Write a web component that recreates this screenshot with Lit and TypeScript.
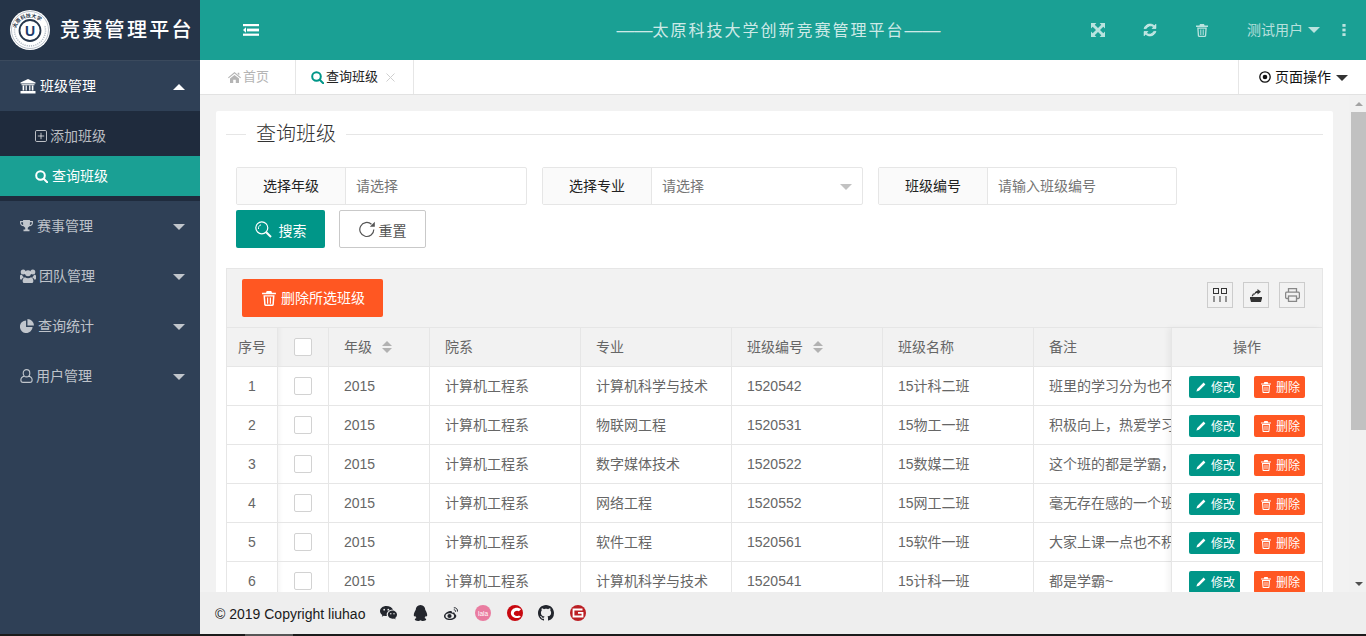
import { LitElement, html, css, svg } from "lit";
import { customElement } from "lit/decorators.js";

const ic = (w: number, h: number, vb: string, body: unknown, cls = "") =>
  html`<svg class="ic ${cls}" width=${w} height=${h} viewBox=${vb} fill="currentColor">${body}</svg>`;

const I = {
  shrink: () => ic(16, 12, "0 0 16 12", svg`<rect width="16" height="2.2"/><rect x="4" y="4.6" width="12" height="2.8"/><rect y="9.6" width="16" height="2.2"/><path d="M3 3.2v5.6L0 6z"/>`),
  bank: () => ic(16, 16, "0 0 16 16", svg`<path d="M8 1 15.5 4.6V5.6H.5V4.6z"/><path d="M1.5 6.2h13v1h-13zM.5 13h15v2.4H.5z"/><path d="M2.6 7.5h1.6v5H2.6zM5.6 7.5h1.2v5H5.6zM9.2 7.5h1.2v5H9.2zM11.8 7.5h1.6v5h-1.6z"/>`),
  trophy: () => ic(13, 12, "0 0 15 14", svg`<path d="M3.5 0h8v1.2H15v2.2c0 2-1.7 3.5-4.2 3.9-.5.8-1.1 1.3-1.8 1.6v2.3h2V13H4v-1.8h2V8.900c-.7-.3-1.300-.8-1.800-1.600C1.700 6.900 0 5.400 0 3.400V1.200h3.500zM1.300 2.500v.9c0 1.100.9 2 2.300 2.400-.1-1-.1-2.100-.1-3.300zm12.400 0h-2.200c0 1.200 0 2.300-.1 3.300 1.400-.4 2.300-1.300 2.300-2.400z"/>`),
  users: () => ic(16, 14, "0 0 16 14", svg`<circle cx="3.200" cy="3" r="2.500"/><circle cx="12.800" cy="3" r="2.500"/><circle cx="8" cy="4.300" r="3"/><path d="M0 7c0-1 1-1.500 2-1.300.3 1 1 2 2 2.600C2.800 8.700 2 9.700 1.800 10.500H.8C.3 10.500 0 10 0 9.500zM16 7c0-1-1-1.500-2-1.300-.3 1-1 2-2 2.600 1.200.4 2 1.400 2.200 2.200h1c.5 0 .8-.5.8-1zM5 8.300c1.700 1.200 4.300 1.200 6 0 1.500.5 2.300 1.700 2.300 3.300v.9c0 .9-.6 1.500-1.500 1.500H4.200c-.9 0-1.500-.6-1.500-1.500v-.9c0-1.600.8-2.800 2.300-3.300z"/>`),
  pie: () => ic(14, 14, "0 0 15 15", svg`<path d="M6.500 1.500v7h7A6.800 6.800 0 1 1 6.500 1.500z"/><path d="M8 0a7 7 0 0 1 7 7H8z"/>`),
  user: () => ic(13, 14, "0 0 15 16", svg`<g fill="none" stroke="currentColor" stroke-width="1.300"><ellipse cx="7.500" cy="4.800" rx="3.800" ry="4.200"/><path d="M4.800 8.200C2.300 8.800 1 10.500 1 12.500 1 14.300 2 15.300 3.500 15.300h8c1.500 0 2.500-1 2.500-2.800 0-2-1.300-3.700-3.800-4.300"/></g>`),
  plusBox: () => ic(12, 12, "0 0 12 12", svg`<g fill="none" stroke="currentColor"><rect x=".5" y=".5" width="11" height="11" rx="1.200"/><path d="M6 2.800v6.400M2.800 6h6.400"/></g>`),
  search: (s = 13) => ic(s, s, "0 0 13 13", svg`<g fill="none" stroke="currentColor" stroke-width="2"><circle cx="5.500" cy="5.500" r="4.300"/><path d="M8.700 8.700 12.200 12.200" stroke-linecap="round"/></g>`),
  home: () => ic(13, 11, "0 0 13 11", svg`<path d="M6.500 0 13 5.600l-.7.700L6.500 1.500.7 6.300 0 5.600zM2 6.600l4.500-3.700L11 6.600V11H7.800V7.800H5.200V11H2zM9.700 .7h1.600v2.600L9.700 2z"/>`),
  close: () => ic(9, 9, "0 0 9 9", svg`<path d="M.5.500l8 8M8.500.500l-8 8" stroke="currentColor" fill="none"/>`),
  full: () => ic(14, 14, "0 0 14 14", svg`<path d="M0 0h5.400L3.700 1.700 7 5 10.300 1.700 8.600 0H14v5.400L12.300 3.700 9 7l3.300 3.300L14 8.600V14H8.600l1.700-1.700L7 9l-3.300 3.300L5.400 14H0V8.600l1.700 1.700L5 7 1.700 3.700 0 5.400z"/>`),
  refresh: () => ic(14, 14, "0 0 14 14", svg`<path stroke="currentColor" stroke-width=".7" d="M12.900 5.500H9.100l1.500-1.500a4.600 4.600 0 0 0-7.300 1.600H1C1.900 3 4.200 1 7 1c1.700 0 3.200.7 4.300 1.800L12.900 1.200zM1.100 8.500h3.800L3.400 10a4.600 4.600 0 0 0 7.300-1.600H13C12.100 11 9.800 13 7 13c-1.700 0-3.200-.7-4.300-1.800L1.100 12.800z"/>`),
  trash: (w = 12, h = 13) => ic(w, h, "0 0 12 13", svg`<path d="M4 0h4l.6 1.600H12v1.300H0V1.600h3.400zM1.200 3.600h9.600l-.6 8.200c0 .7-.5 1.200-1.200 1.200H3c-.7 0-1.200-.5-1.200-1.200zm1.400 1.200.5 7h5.800l.5-7zM4.300 5.600h1v5.400h-1zM6.700 5.600h1v5.400h-1z"/>`),
  dots: () => ic(4, 12, "0 0 4 12", svg`<rect x=".4" width="3.200" height="2.800"/><rect x=".4" y="4.600" width="3.200" height="2.800"/><rect x=".4" y="9.200" width="3.200" height="2.800"/>`),
  target: () => ic(12, 12, "0 0 12 12", svg`<circle cx="6" cy="6" r="5.200" fill="none" stroke="currentColor" stroke-width="1.300"/><circle cx="6" cy="6" r="2.300"/>`),
  reload: () => ic(17, 17, "0 0 17 17", svg`<g fill="none" stroke="currentColor" stroke-width="1.200"><path d="M14.800 8.500a7 7 0 1 1-2.300-5.200"/></g><path d="M15.800 .8v5h-5z"/>`),
  searchThin: () => ic(17, 17, "0 0 17 17", svg`<g fill="none" stroke="currentColor"><circle cx="6.800" cy="6.800" r="6" stroke-width="1.200"/><path d="M3.500 8c-.4-2 .8-3.800 2.500-4.200" /><path d="M11.200 11.200 16 16" stroke-width="2"/></g>`),
  pencil: () => ic(10, 10, "0 0 10 10", svg`<path d="M7.600.600l1.800 1.800L3 8.800.4 9.600l.8-2.600z"/>`),
  cols: () => ic(14, 14, "0 0 14 14", svg`<g fill="none" stroke="currentColor"><rect x=".5" y=".5" width="5" height="5"/><rect x="8.500" y=".5" width="5" height="5"/><path d="M1 8v6M7 8v6M13 8v6"/></g>`),
  exportI: () => ic(14, 14, "0 0 14 14", svg`<path d="M1 9h12v1.200l-1 3.800H2L1 10.200z"/><path d="M2.500 8.200 4 5.500h2v1H4.700l-.7 1.700zM8.500 1 12 3.800 8.500 6.600V4.900C7 4.900 6 5.500 5.500 7 5.300 4.600 6.500 3 8.500 2.800z"/>`),
  print: () => ic(15, 14, "0 0 15 14", svg`<g fill="none" stroke="currentColor" stroke-width="1.300"><path d="M3.500 4V.6h8V4M3.500 10.500H1.800C1 10.500.6 10 .6 9.300V5.500C.6 4.700 1 4.200 1.800 4.200h11.400c.8 0 1.200.5 1.200 1.300v3.800c0 .7-.4 1.200-1.200 1.200h-1.700"/><rect x="3.500" y="8" width="8" height="5.400"/></g>`),
  wechat: () => ic(17, 15, "0 0 17 15", svg`<path d="M6.300 0C2.900 0 0 2.200 0 5.100c0 1.600.9 3 2.300 4l-.5 1.700 2-1c.8.200 1.600.3 2.500.3h.6A4 4 0 0 1 6.700 8.600c0-2.700 2.600-4.800 5.800-4.800h.5C12.300 1.600 9.500 0 6.300 0z"/><path d="M17 8.600c0-2.400-2.300-4.100-4.500-4.100-2.600 0-4.700 1.800-4.700 4.100s2.100 4.100 4.700 4.100c.5 0 1.100-.1 1.600-.2l1.500.9-.4-1.400c1.100-.8 1.800-2 1.800-3.400z"/><circle cx="4.200" cy="3.700" r=".9" fill="#eee"/><circle cx="8.300" cy="3.700" r=".9" fill="#eee"/><circle cx="10.800" cy="7.700" r=".7" fill="#eee"/><circle cx="14" cy="7.700" r=".7" fill="#eee"/>`),
  qq: () => ic(15, 16, "0 0 15 16", svg`<path d="M7.500 0c3 0 4.700 2.200 4.800 5 .9 1.200 1.900 3.400 1.900 5.300 0 1.300-.6 1.600-1.400.5-.2.900-.7 1.700-1.300 2.300 1 .4 1.700.9 1.700 1.500 0 .9-1.500 1.400-3.200 1.400-1 0-2-.3-2.500-.7-.5.400-1.500.7-2.500.7-1.700 0-3.200-.5-3.200-1.400 0-.6.700-1.100 1.700-1.500-.6-.6-1.100-1.400-1.300-2.300-.8 1.100-1.400.8-1.400-.5 0-1.900 1-4.100 1.900-5.300C2.800 2.200 4.500 0 7.500 0z"/>`),
  weibo: () => ic(15, 14, "0 0 15 14", svg`<path d="M6 5C3 5.600 0 8 0 10.200 0 12.300 2.700 14 6 14c3.400 0 6.300-1.900 6.300-4 0-1.300-1.200-1.700-1.700-1.900.5-1 .3-2-1.700-1.500C8.800 6.700 8 7 8 6.500c.2-1.100-.6-1.800-2-1.500z" /><ellipse cx="5.800" cy="10" rx="4.300" ry="2.800" fill="#eee"/><circle cx="5.500" cy="10" r="2.100"/><path d="M9.800 1.800c2.200-.5 4.200 1.400 3.600 3.800M9.800 3.800c1.100-.2 2 .8 1.700 1.900" stroke="currentColor" fill="none"/>`),
  lala: () => ic(16, 16, "0 0 16 16", svg`<circle cx="8" cy="8" r="8" fill="#e97ca0"/><text x="8" y="10.500" font-size="6.500" fill="#fff" text-anchor="middle" font-family="Liberation Sans">lala</text>`),
  cc: () => ic(16, 16, "0 0 16 16", svg`<circle cx="8" cy="8" r="8" fill="#c8080f"/><path d="M14 4.300C11.600 2.300 8 2.300 5.700 4.300 3.300 6.400 3.300 9.800 5.700 11.700c2.300 1.900 6 1.800 8.300 0l-2-1.300C10.400 11.400 8.500 11.200 7.500 10.100 6.400 8.900 6.700 7.300 7.900 6.400c1.100-.9 2.900-1 4-.2z" fill="#fff"/>`),
  github: () => ic(16, 16, "0 0 16 16", svg`<path d="M8 0C3.580 0 0 3.580 0 8c0 3.540 2.290 6.530 5.470 7.590.4.07.55-.17.55-.38 0-.19-.01-.82-.01-1.490-2.010.37-2.530-.49-2.690-.94-.09-.23-.48-.94-.82-1.130-.28-.15-.68-.52-.01-.53.63-.01 1.080.58 1.230.82.72 1.210 1.870.87 2.330.66.07-.52.28-.87.51-1.070-1.780-.2-3.640-.89-3.640-3.950 0-.87.31-1.590.82-2.150-.08-.2-.36-1.020.08-2.120 0 0 .67-.21 2.200.82.64-.18 1.320-.27 2-.27.68 0 1.360.09 2 .27 1.530-1.040 2.200-.82 2.200-.82.44 1.100.16 1.920.08 2.120.51.56.82 1.270.82 2.150 0 3.070-1.870 3.750-3.650 3.950.29.25.54.73.54 1.480 0 1.070-.01 1.930-.01 2.200 0 .21.15.46.55.38A8.013 8.013 0 0016 8c0-4.420-3.580-8-8-8z"/>`),
  gg: () => ic(16, 16, "0 0 16 16", svg`<circle cx="8" cy="8" r="8" fill="#bb1f24"/><path d="M12.500 4.500h-9v7h9V7.800H8" fill="none" stroke="#fff" stroke-width="1.800"/>`),
  logo: () => html`<svg class="logo" width="40" height="40" viewBox="0 0 40 40">
    <circle cx="20" cy="20" r="20" fill="#fff"/>
    <circle cx="20" cy="20" r="18.500" fill="none" stroke="#8d99a8" stroke-width=".6"/>
    <circle cx="20" cy="20.500" r="15.500" fill="none" stroke="#b6bec8" stroke-width="1.500" stroke-dasharray="1.200 1"/>
    <defs><path id="arc" d="M5.500 22a14.500 14.500 0 0 1 29 0"/></defs>
    <path d="M6 16a15 15 0 0 1 28 0" fill="none" stroke="#fff" stroke-width="5"/>
    <text font-size="5" font-family="Noto Sans CJK SC" font-weight="700" fill="#26364b"><textPath href="#arc" startOffset="8%">太原科技大学</textPath></text>
    <circle cx="20" cy="20.500" r="10.500" fill="#fff" stroke="#26364b" stroke-width="1.800"/>
    <text x="20" y="25.500" font-size="14" font-weight="700" font-family="Liberation Sans" fill="#1d3a6b" text-anchor="middle">U</text>
  </svg>`,
};

const rows = [
  ["1", "2015", "计算机工程系", "计算机科学与技术", "1520542", "15计科二班", "班里的学习分为也不错"],
  ["2", "2015", "计算机工程系", "物联网工程", "1520531", "15物工一班", "积极向上，热爱学习"],
  ["3", "2015", "计算机工程系", "数字媒体技术", "1520522", "15数媒二班", "这个班的都是学霸，"],
  ["4", "2015", "计算机工程系", "网络工程", "1520552", "15网工二班", "毫无存在感的一个班"],
  ["5", "2015", "计算机工程系", "软件工程", "1520561", "15软件一班", "大家上课一点也不积极"],
  ["6", "2015", "计算机工程系", "计算机科学与技术", "1520541", "15计科一班", "都是学霸~"],
];

const menus = [
  { t: "赛事管理", i: I.trophy, gap: 4 },
  { t: "团队管理", i: I.users, gap: 3 },
  { t: "查询统计", i: I.pie, gap: 4 },
  { t: "用户管理", i: I.user, gap: 3 },
];

@customElement("app-root")
export class AppRoot extends LitElement {
  static styles = css`
    :host { display: flex; flex-direction: column; height: 636px; width: 1366px; overflow: hidden;
      font-family: "Liberation Sans", "Noto Sans CJK SC", sans-serif; font-size: 14px; line-height: 20px; color: #666; }
    * { box-sizing: border-box; }
    .ic { display: block; flex: none; }
    .shell { display: flex; height: 634px; }
    .strip { height: 2px; background: #1b1b1b; display: flex; padding-left: 245px; }
    .strip i { display: block; width: 48px; background: #565656; }

    .side { width: 200px; flex: none; background: #2f4056; color: rgba(255,255,255,.7); }
    .brand { height: 61px; background: #253448; border-bottom: 1px solid #3b4a5d; display: flex; align-items: center; padding-left: 10px; gap: 10px; }
    .logo { display: block; flex: none; }
    .brand-t { color: #fff; font-size: 20px; letter-spacing: 2.300px; white-space: nowrap; font-weight: 500; line-height: 28px; }
    .mi { height: 50px; display: flex; align-items: center; padding-left: 20px; position: relative; }
    .mi.open { color: #fff; }
    .mi .name { flex: 1; }
    .caret { width: 0; height: 0; border: 6px solid transparent; border-bottom-width: 0; border-top: 6px solid currentColor; }
    .caret.up { border-top-width: 0; border-bottom: 6px solid currentColor; border-top-color: transparent; }
    .mi .caret { margin-right: 15px; margin-top: 1px; }
    .sub { background: #1f2b3d; padding: 5px 0; }
    .si { height: 40px; padding-left: 35px; display: flex; align-items: center; }
    .si.on { background: #1aa094; color: #fff; }

    .main { flex: 1; min-width: 0; display: flex; flex-direction: column; }
    .top { height: 60px; flex: none; background: #1aa094; color: rgba(255,255,255,.7); display: flex; align-items: center; }
    .top .toggle { margin-left: 43px; color: #fff; }
    .top .title { position: absolute; left: 616px; width: 325px; text-align: center; font-size: 16px; letter-spacing: 2px; white-space: nowrap; top: 20px; line-height: 20px; color: rgba(255,255,255,.8); }
    .top .title .dash { letter-spacing: 0; font-size: 18px; }
    .top .right { margin-left: auto; display: flex; align-items: center; }
    .top .a1 { margin-right: 38px; }
    .top .a2 { margin-right: 39px; }
    .top .a3 { margin-right: 39px; }
    .top .name { margin-right: 5px; white-space: nowrap; }
    .top .dots { margin-left: 22px; margin-right: 20px; }

    .tabs { height: 35px; flex: none; background: #fff; border-bottom: 1px solid #e2e2e2; display: flex; }
    .tab { display: flex; align-items: center; border-right: 1px solid #e6e6e6; height: 34px; font-size: 13px; }
    .tab.t1 { width: 96px; padding-left: 28px; color: #b5b5b5; gap: 2px; }
    .tab.t2 { width: 118px; padding-left: 15px; color: #222; gap: 2px; }
    .tab.t2 > .ic { color: #009688; }
    .tab.t2 .x { margin-left: 6px; color: #cfcfcf; }
    .tab-end { margin-left: auto; width: 128px; border-left: 1px solid #e6e6e6; display: flex; align-items: center; padding-left: 20px; gap: 4px; color: #111; white-space: nowrap; }
    .tab-end .caret { margin-left: 1px; color: #333; margin-top: 1px; }

    .mid { flex: 1; min-height: 0; display: flex; background: #f2f2f2; }
    .pane { flex: 1; min-width: 0; overflow: hidden; padding: 16px 16px 0; }
    .card { background: #fff; border-radius: 2px; padding: 0 10px 20px; }
    .bar { width: 17px; flex: none; display: flex; flex-direction: column; background: #f1f1f1; padding-left: 2px; position: relative; }
    .arr { height: 17px; display: flex; align-items: center; justify-content: center; flex: none; }
    .arr .caret { border-width: 4px; color: #a3a3a3; }
    .arr .caret.up { border-top-width: 0; border-bottom-width: 4px; }
    .arr .caret.down { border-bottom-width: 0; border-top-width: 4px; color: #505050; }
    .thumb { height: 318px; background: #c1c1c1; flex: none; }
    .sp { flex: 1; }

    .legend { height: 46px; display: flex; align-items: center; margin-bottom: 10px; }
    .legend i { display: block; height: 1px; background: #e6e6e6; width: 20px; }
    .legend i:last-child { flex: 1; }
    .legend span { padding: 0 10px; font-size: 20px; color: #333; line-height: 28px; font-weight: 300; }

    .form { padding-left: 10px; }
    .frow { display: flex; gap: 15px; margin-bottom: 5px; }
    .fi { display: flex; height: 38px; border: 1px solid #e6e6e6; border-radius: 2px; color: #222; align-items: stretch; background: #fff; }
    .fl { width: 109px; background: #fafafa; border-right: 1px solid #e6e6e6; display: flex; align-items: center; justify-content: center; }
    .fv { padding-left: 10px; color: #757575; display: flex; align-items: center; position: relative; flex: 1; }
    .w1 { width: 291px; } .w2 { width: 321px; } .w3 { width: 299px; }
    .fv .caret { margin-left: auto; margin-right: 10px; color: #c2c2c2; margin-top: 1px; }
    .btns { display: flex; gap: 14px; }
    .btn { height: 38px; border-radius: 2px; display: flex; align-items: center; justify-content: center; }
    .b-s { width: 89px; background: #009688; color: #fff; gap: 7px; }
    .b-s span { padding-top: 3px; }
    .b-r { width: 87px; border: 1px solid #c9c9c9; color: #555; gap: 3px; background: #fff; }
    .b-r span { padding-top: 3px; }

    .tbl { margin-top: 20px; border: 1px solid #e6e6e6; }
    .tool { height: 59px; background: #f2f2f2; border-bottom: 1px solid #e6e6e6; display: flex; justify-content: space-between; padding: 10px 17px 0 15px; }
    .del { height: 38px; width: 141px; background: #ff5722; color: #fff; border-radius: 2px; display: flex; align-items: center; justify-content: center; gap: 5px; padding-left: 2px; }
    .tools { display: flex; gap: 10px; padding-top: 3px; }
    .tb { width: 26px; height: 26px; border: 1px solid #ccc; display: flex; align-items: center; justify-content: center; color: #333; }
    .tb.gr { color: #888; }
    .body { display: flex; }
    .left { flex: 1; min-width: 0; overflow: hidden; }
    .gr-row { display: grid; grid-template-columns: 51px 51px 101px 151px 151px 151px 151px minmax(0, 1fr); height: 39px; border-bottom: 1px solid #e6e6e6; background: #fff; }
    .gr-row.h { background: #f2f2f2; }
    .c { display: flex; align-items: center; padding: 0 15px; border-right: 1px solid #e6e6e6; white-space: nowrap; overflow: hidden; min-width: 0; }
    .c:last-child { border-right: 0; padding-right: 0; }
    .c.n { justify-content: center; padding: 0; }
    .c.k { justify-content: center; padding: 0; background: linear-gradient(90deg, rgba(0,0,0,.03), rgba(0,0,0,0) 5px); }
    .chk { width: 18px; height: 18px; background: #fff; border: 1px solid #d2d2d2; border-radius: 2px; display: block; }
    .sort { margin-left: 10px; display: flex; flex-direction: column; gap: 2px; color: #b2b2b2; }
    .sort .caret { border-width: 5px; }
    .sort .caret.up { border-top-width: 0; border-bottom-width: 5px; }
    .sort .caret.down { border-bottom-width: 0; border-top-width: 5px; }
    .right-col { width: 151px; flex: none; border-left: 1px solid #e6e6e6; box-shadow: -3px 0 6px rgba(0,0,0,.05); position: relative; background: #fff; }
    .op-h { height: 39px; background: #f2f2f2; border-bottom: 1px solid #e6e6e6; display: flex; align-items: center; justify-content: center; }
    .op { height: 39px; border-bottom: 1px solid #e6e6e6; display: flex; align-items: center; gap: 14px; padding: 2px 0 0 17px; }
    .ob { width: 51px; height: 22px; border-radius: 2px; color: #fff; font-size: 12px; display: flex; align-items: center; gap: 5px; padding-left: 7px; }
    .ob span { padding-top: 2px; }
    .ob.g { background: #009688; }
    .ob.o { background: #ff5722; }

    .foot { height: 42px; flex: none; background: #eee; display: flex; align-items: center; padding-left: 15px; color: #1a1a1a; }
    .copy { width: 158px; white-space: nowrap; padding-top: 2px; }
    .soc { display: flex; align-items: center; color: #23262d; }
    .soc span { width: 31.500px; display: flex; justify-content: center; }
  `;

  private sort() {
    return html`<span class="sort"><span class="caret up"></span><span class="caret down"></span></span>`;
  }

  render() {
    return html`
      <div class="shell">
        <aside class="side">
          <div class="brand">${I.logo()}<span class="brand-t">竞赛管理平台</span></div>
          <div class="mi open">${I.bank()}<span class="name" style="margin-left:4px">班级管理</span><span class="caret up"></span></div>
          <div class="sub">
            <div class="si">${I.plusBox()}<span style="margin-left:3px">添加班级</span></div>
            <div class="si on">${I.search()}<span style="margin-left:4px">查询班级</span></div>
          </div>
          ${menus.map((m) => html`<div class="mi">${m.i()}<span class="name" style="margin-left:${m.gap}px">${m.t}</span><span class="caret"></span></div>`)}
        </aside>
        <div class="main">
          <header class="top">
            <span class="toggle">${I.shrink()}</span>
            <span class="title"><span class="dash">——</span>太原科技大学创新竞赛管理平台<span class="dash">——</span></span>
            <div class="right">
              <span class="a1">${I.full()}</span>
              <span class="a2">${I.refresh()}</span>
              <span class="a3">${I.trash()}</span>
              <span class="name">测试用户</span>
              <span class="caret"></span>
              <span class="dots">${I.dots()}</span>
            </div>
          </header>
          <nav class="tabs">
            <div class="tab t1">${I.home()}<span>首页</span></div>
            <div class="tab t2">${I.search()}<span>查询班级</span><span class="x">${I.close()}</span></div>
            <div class="tab-end">${I.target()}<span>页面操作</span><span class="caret"></span></div>
          </nav>
          <div class="mid">
            <div class="pane">
              <section class="card">
                <div class="legend"><i></i><span>查询班级</span><i></i></div>
                <div class="form">
                  <div class="frow">
                    <div class="fi w1"><div class="fl">选择年级</div><div class="fv">请选择</div></div>
                    <div class="fi w2"><div class="fl">选择专业</div><div class="fv">请选择<span class="caret"></span></div></div>
                    <div class="fi w3"><div class="fl">班级编号</div><div class="fv">请输入班级编号</div></div>
                  </div>
                  <div class="btns">
                    <div class="btn b-s">${I.searchThin()}<span>搜索</span></div>
                    <div class="btn b-r">${I.reload()}<span>重置</span></div>
                  </div>
                </div>
                <div class="tbl">
                  <div class="tool">
                    <div class="del">${I.trash(14, 15)}<span>删除所选班级</span></div>
                    <div class="tools">
                      <span class="tb">${I.cols()}</span>
                      <span class="tb">${I.exportI()}</span>
                      <span class="tb gr">${I.print()}</span>
                    </div>
                  </div>
                  <div class="body">
                    <div class="left">
                      <div class="gr-row h">
                        <div class="c n">序号</div><div class="c k"><span class="chk"></span></div>
                        <div class="c">年级${this.sort()}</div><div class="c">院系</div><div class="c">专业</div>
                        <div class="c">班级编号${this.sort()}</div><div class="c">班级名称</div><div class="c">备注</div>
                      </div>
                      ${rows.map((r) => html`<div class="gr-row">
                        <div class="c n">${r[0]}</div><div class="c k"><span class="chk"></span></div>
                        ${r.slice(1).map((v) => html`<div class="c">${v}</div>`)}
                      </div>`)}
                    </div>
                    <div class="right-col">
                      <div class="op-h">操作</div>
                      ${rows.map(() => html`<div class="op">
                        <span class="ob g">${I.pencil()}<span>修改</span></span>
                        <span class="ob o">${I.trash(10, 11)}<span>删除</span></span>
                      </div>`)}
                    </div>
                  </div>
                </div>
              </section>
            </div>
            <div class="bar">
              <div class="arr"><span class="caret up"></span></div>
              <div class="thumb"></div>
              <div class="sp"></div>
              <div class="arr"><span class="caret down"></span></div>
            </div>
          </div>
          <footer class="foot">
            <span class="copy">© 2019 Copyright liuhao</span>
            <div class="soc">
              <span>${I.wechat()}</span><span>${I.qq()}</span><span>${I.weibo()}</span><span>${I.lala()}</span><span>${I.cc()}</span><span>${I.github()}</span><span>${I.gg()}</span>
            </div>
          </footer>
        </div>
      </div>
      <div class="strip"><i></i></div>
    `;
  }
}
